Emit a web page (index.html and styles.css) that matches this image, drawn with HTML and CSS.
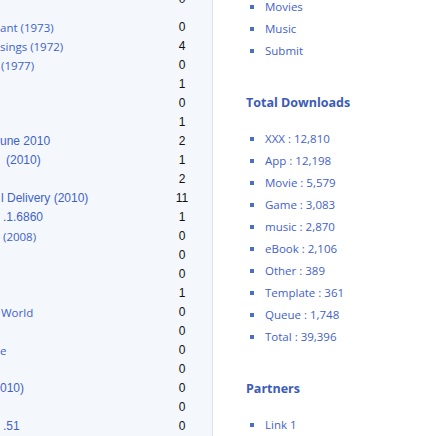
FILE: index.html
```html
<!DOCTYPE html>
<html>
<head>
<meta charset="utf-8">
<link rel="stylesheet" href="styles.css">
</head>
<body>
<div class="page">
  <div class="main">
    <div class="group group-prev">
      <div class="row"><span class="title"></span><span class="count">0</span></div>
    </div>
    <div class="group group-list">
      <div class="row"><a class="title">ant (1973)</a><span class="count">0</span></div>
      <div class="row"><a class="title">sings (1972)</a><span class="count">4</span></div>
      <div class="row"><a class="title pad1">(1977)</a><span class="count">0</span></div>
      <div class="row"><a class="title"></a><span class="count">1</span></div>
      <div class="row"><a class="title"></a><span class="count">0</span></div>
      <div class="row"><a class="title"></a><span class="count">1</span></div>
      <div class="row"><a class="title alt">une 2010</a><span class="count">2</span></div>
      <div class="row"><a class="title alt pad6">(2010)</a><span class="count">1</span></div>
      <div class="row"><a class="title"></a><span class="count">2</span></div>
      <div class="row"><a class="title alt pad1">l Delivery (2010)</a><span class="count">11</span></div>
      <div class="row"><a class="title alt pad3">.1.6860</a><span class="count">1</span></div>
      <div class="row"><a class="title pad3">(2008)</a><span class="count">0</span></div>
      <div class="row"><a class="title"></a><span class="count">0</span></div>
      <div class="row"><a class="title"></a><span class="count">0</span></div>
      <div class="row"><a class="title"></a><span class="count">1</span></div>
      <div class="row"><a class="title pad1">World</a><span class="count">0</span></div>
      <div class="row"><a class="title"></a><span class="count">0</span></div>
      <div class="row"><a class="title">e</a><span class="count">0</span></div>
      <div class="row"><a class="title"></a><span class="count">0</span></div>
      <div class="row"><a class="title alt">010)</a><span class="count">0</span></div>
      <div class="row"><a class="title"></a><span class="count">0</span></div>
      <div class="row"><a class="title alt pad3">.51</a><span class="count">0</span></div>
    </div>
  </div>
  <div class="sidebar">
    <ul class="list list-top">
      <li>Movies</li>
      <li>Music</li>
      <li>Submit</li>
    </ul>
    <h3 class="heading">Total Downloads</h3>
    <ul class="list">
      <li>XXX : 12,810</li>
      <li>App : 12,198</li>
      <li>Movie : 5,579</li>
      <li>Game : 3,083</li>
      <li>music : 2,870</li>
      <li>eBook : 2,106</li>
      <li>Other : 389</li>
      <li>Template : 361</li>
      <li>Queue : 1,748</li>
      <li>Total : 39,396</li>
    </ul>
    <h3 class="heading">Partners</h3>
    <ul class="list">
      <li>Link 1</li>
    </ul>
  </div>
</div>
</body>
</html>
```
FILE: styles.css
```css
html, body {
  margin: 0;
  padding: 0;
  background: #ffffff;
  overflow: hidden;
}

.page {
  display: flex;
  height: 436px;
  overflow: hidden;
}

.main {
  width: 212px;
  flex: none;
  background: #f4f8fc;
  border-right: 1px solid #dde1e6;
  display: flex;
  flex-direction: column;
  overflow: hidden;
}

.group-prev {
  margin-top: -10px;
}

.group-list {
  margin-top: 9px;
}

.row {
  display: flex;
  height: 19px;
  line-height: 19px;
}

.title {
  flex: 1;
  min-width: 0;
  overflow: hidden;
  white-space: nowrap;
  font-family: "Open Sans", Lato, sans-serif;
  font-size: 11.5px;
  color: #3f62c8;
  text-decoration: none;
}

.title.alt {
  font-family: "Liberation Sans", Arial, sans-serif;
  font-size: 12px;
}

.pad1 { padding-left: 1px; }
.pad3 { padding-left: 3px; }
.pad6 { padding-left: 6px; }

.count {
  width: 60px;
  flex: none;
  text-align: center;
  font-family: "Liberation Sans", Arial, sans-serif;
  font-size: 12px;
  color: #111111;
}

.sidebar {
  flex: 1;
  padding-left: 33px;
  display: flex;
  flex-direction: column;
  font-family: "Open Sans", Lato, sans-serif;
}

.list {
  list-style: none;
  margin: 0;
  padding: 0 0 0 19px;
}

.list-top {
  margin-top: -4px;
}

.list li {
  position: relative;
  height: 22px;
  line-height: 22px;
  font-size: 11.5px;
  color: #3f62c8;
}

.list li::before {
  content: "";
  position: absolute;
  left: -15px;
  top: 9px;
  width: 4px;
  height: 4px;
  background: #4a70c4;
}

.heading {
  margin: 31px 0 15px 0;
  height: 20px;
  line-height: 20px;
  font-size: 12.5px;
  font-weight: bold;
  color: #3b5bb8;
}
```
